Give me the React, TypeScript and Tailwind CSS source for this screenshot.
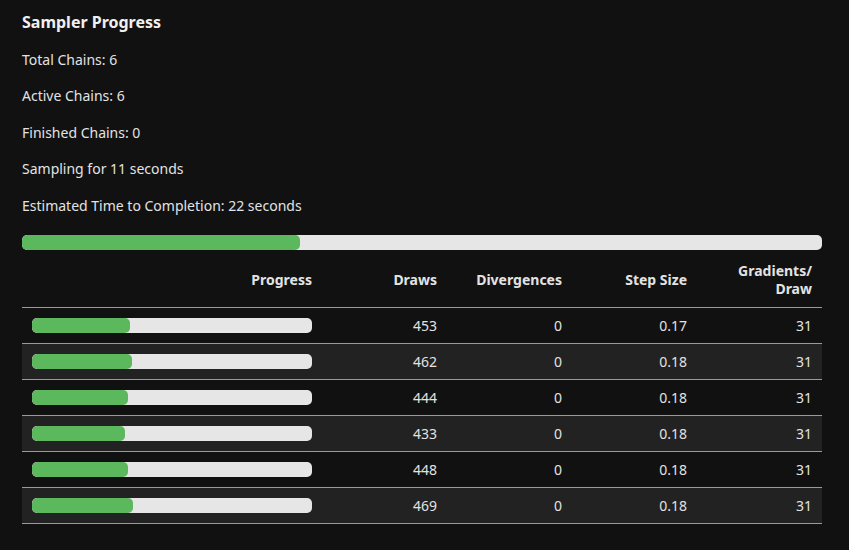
const chains = [
  { draws: 453, fill: 98, divergences: 0, step: "0.17", grads: 31 },
  { draws: 462, fill: 100, divergences: 0, step: "0.18", grads: 31 },
  { draws: 444, fill: 96, divergences: 0, step: "0.18", grads: 31 },
  { draws: 433, fill: 93, divergences: 0, step: "0.18", grads: 31 },
  { draws: 448, fill: 96, divergences: 0, step: "0.18", grads: 31 },
  { draws: 469, fill: 101, divergences: 0, step: "0.18", grads: 31 },
];

const stats = [
  "Total Chains: 6",
  "Active Chains: 6",
  "Finished Chains: 0",
  "Sampling for 11 seconds",
  "Estimated Time to Completion: 22 seconds",
];

function Bar({ width, fill }: { width: number; fill: number }) {
  return (
    <div className="h-[15px] overflow-hidden rounded-[5px] bg-[#e6e6e6]" style={{ width }}>
      <div className="h-full rounded-[5px] bg-[#5cb85c]" style={{ width: fill }} />
    </div>
  );
}

export default function App() {
  return (
    <div className="min-h-screen bg-[#111111] font-['Noto_Sans',sans-serif] text-[#e3e3e3]">
      <div className="px-[22px] pt-[11px]">
        <h3 className="text-[16px] font-bold leading-[22px] text-[#f0f0f0]">Sampler Progress</h3>
        {stats.map((line) => (
          <p key={line} className="mt-[16.5px] text-[14px] leading-[20px]">
            {line}
          </p>
        ))}
        <div className="mt-[19px]">
          <Bar width={800} fill={278} />
        </div>
        <table className="mt-[5px] w-[800px] border-collapse text-[14px]">
          <thead>
            <tr className="border-b border-[#9a9a9a]">
              <th className="w-[300px] px-[10px] pt-[7px] pb-[9px] text-right font-bold leading-[18px]">Progress</th>
              <th className="w-[125px] px-[10px] pt-[7px] pb-[9px] text-right font-bold leading-[18px]">Draws</th>
              <th className="w-[125px] px-[10px] pt-[7px] pb-[9px] text-right font-bold leading-[18px]">Divergences</th>
              <th className="w-[125px] px-[10px] pt-[7px] pb-[9px] text-right font-bold leading-[18px]">Step Size</th>
              <th className="w-[125px] px-[10px] pt-[7px] pb-[9px] text-right font-bold leading-[18px]">
                Gradients/
                <br />
                Draw
              </th>
            </tr>
          </thead>
          <tbody>
            {chains.map((c, i) => (
              <tr
                key={i}
                className={`h-[36px] border-b border-[#9a9a9a] ${i % 2 === 1 ? "bg-[#222222]" : ""}`}
              >
                <td className="px-[10px] align-middle">
                  <Bar width={280} fill={c.fill} />
                </td>
                <td className="px-[10px] text-right">{c.draws}</td>
                <td className="px-[10px] text-right">{c.divergences}</td>
                <td className="px-[10px] text-right">{c.step}</td>
                <td className="px-[10px] text-right">{c.grads}</td>
              </tr>
            ))}
          </tbody>
        </table>
      </div>
    </div>
  );
}
